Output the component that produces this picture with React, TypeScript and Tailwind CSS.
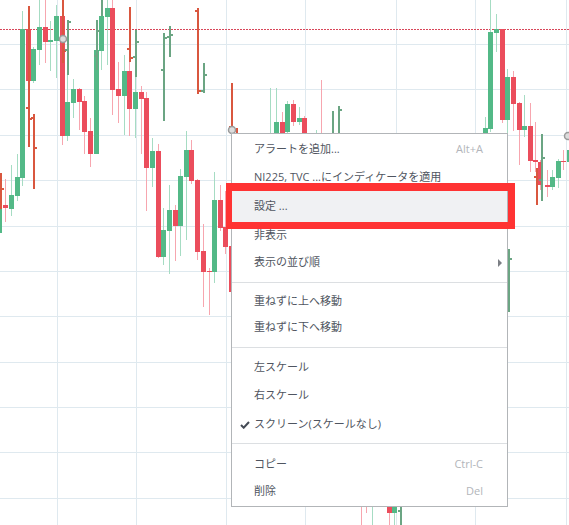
const GRID_X = [57, 136, 226, 305, 396, 475, 566];
const GRID_Y = [44, 89, 135, 180, 226, 271, 316, 362, 407, 452, 498];

// [left, bodyTop, bodyBottom, wickTop, wickBottom]
type C = [number, number, number, number, number];

const GREEN: C[] = [
  [-3, 209, 233, 200, 250],
  [9, 195, 209, 165, 216],
  [15, 177, 196, 154, 201],
  [20, 29, 178, 11, 186],
  [31, 49, 81, 47, 83],
  [37, 27, 50, 0, 65],
  [48, 40, 42, 21, 71],
  [54, 16, 41, 5, 78],
  [65, 102, 136, 75, 141],
  [71, 89, 103, 79, 118],
  [94, 50, 154, 40, 154],
  [99, 16, 51, 0, 70],
  [105, 8, 17, 0, 65],
  [122, 71, 96, 55, 135],
  [133, 92, 109, 66, 138],
  [150, 151, 168, 138, 187],
  [161, 230, 257, 208, 265],
  [167, 210, 231, 185, 274],
  [178, 176, 226, 169, 256],
  [184, 150, 177, 131, 240],
  [212, 200, 272, 172, 283],
  [268, 140, 140, 88, 140],
  [274, 122, 133, 88, 134],
  [285, 104, 132, 101, 134],
  [297, 118, 122, 107, 125],
  [314, 134, 134, 130, 134],
  [483, 128, 133, 117, 134],
  [488, 32, 129, 0, 132],
  [494, 29, 33, 14, 52],
  [505, 77, 120, 69, 134],
  [522, 126, 130, 95, 137],
  [550, 177, 187, 170, 190],
  [556, 161, 178, 159, 188],
  [567, 150, 162, 146, 170],
  [370, 525, 525, 505, 525],
  [392, 506, 513, 505, 525],
];

const RED: C[] = [
  [3, 205, 208, 179, 222],
  [26, 29, 81, 29, 81],
  [43, 27, 42, 0, 63],
  [60, 16, 136, 0, 145],
  [77, 89, 102, 88, 130],
  [82, 101, 132, 96, 154],
  [88, 131, 154, 118, 167],
  [110, 8, 90, 0, 115],
  [116, 89, 96, 62, 123],
  [127, 71, 109, 60, 136],
  [139, 92, 99, 86, 154],
  [144, 98, 168, 92, 211],
  [156, 151, 257, 144, 258],
  [173, 210, 226, 205, 261],
  [189, 150, 181, 140, 184],
  [195, 180, 252, 179, 260],
  [201, 251, 272, 224, 307],
  [207, 271, 272, 268, 315],
  [218, 200, 228, 185, 231],
  [223, 227, 247, 191, 254],
  [229, 246, 292, 246, 292],
  [280, 122, 133, 112, 134],
  [291, 104, 122, 100, 126],
  [302, 118, 133, 116, 134],
  [319, 134, 134, 80, 134],
  [500, 29, 120, 29, 123],
  [511, 77, 104, 71, 131],
  [517, 103, 130, 102, 165],
  [528, 126, 161, 103, 172],
  [533, 160, 162, 122, 172],
  [538, 162, 185, 160, 190],
  [545, 185, 187, 170, 197],
  [561, 161, 162, 150, 170],
  [359, 525, 525, 505, 525],
  [364, 525, 525, 505, 513],
  [387, 506, 513, 505, 525],
];

// candles overlap their neighbours, so paint them left to right
const CANDLES = [
  ...GREEN.map((c) => ({ c, body: "#53b987", wick: "#a6dcc3" })),
  ...RED.map((c) => ({ c, body: "#eb4d5c", wick: "#f7a6af" })),
].sort((a, b) => a.c[0] - b.c[0]);

// [x, top, bottom, leftTick, rightTick]
type B = [number, number, number, number | null, number | null];

const DARK_RED: B[] = [
  [0, 173, 209, null, 188],
  [28, 6, 147, 107, 118],
  [33, 114, 189, 117, 147],
  [62, 0, 63, null, 50],
  [129, 7, 62, 48, 57],
  [197, 8, 94, 10, 90],
  [231, 83, 134, 126, null],
  [236, 128, 134, null, null],
  [536, 168, 205, 176, null],
];

const DARK_GREEN: B[] = [
  [67, 20, 75, 49, 21],
  [96, 20, 70, 55, 30],
  [101, 0, 16, null, null],
  [135, 30, 77, 56, 41],
  [163, 33, 121, 69, 37],
  [169, 26, 57, 36, 34],
  [203, 63, 93, 90, 74],
  [332, 111, 134, null, null],
  [338, 106, 134, null, 109],
  [508, 249, 312, null, 258],
  [541, 134, 201, 179, 157],
  [400, 505, 525, 510, null],
];

function Bar({ b, color }: { b: B; color: string }) {
  const [x, top, bottom, l, r] = b;
  return (
    <g fill={color}>
      <rect x={x} y={top} width={2} height={bottom - top} />
      {l !== null && <rect x={x - 2} y={l} width={2} height={2} />}
      {r !== null && <rect x={x + 2} y={r} width={2} height={2} />}
    </g>
  );
}

function Candle({ c, body, wick }: { c: C; body: string; wick: string }) {
  const [x, bt, bb, wt, wb] = c;
  return (
    <g>
      <rect x={x + 2} y={wt} width={1} height={wb - wt} fill={wick} />
      <rect x={x} y={bt} width={5} height={bb - bt} fill={body} />
    </g>
  );
}

function Chart() {
  return (
    <svg width={569} height={525} className="absolute inset-0" shapeRendering="crispEdges">
      {GRID_X.map((x) => (
        <rect key={x} x={x} y={0} width={1} height={525} fill="#dfe9ef" />
      ))}
      {GRID_Y.map((y) => (
        <rect key={y} x={0} y={y} width={569} height={1} fill="#dfe9ef" />
      ))}
      <line x1={0} y1={29.5} x2={569} y2={29.5} stroke="#d8475a" strokeDasharray="2 1" />
      {CANDLES.map((k, i) => (
        <Candle key={i} c={k.c} body={k.body} wick={k.wick} />
      ))}
      {DARK_RED.map((b, i) => (
        <Bar key={i} b={b} color="#d9573f" />
      ))}
      {DARK_GREEN.map((b, i) => (
        <Bar key={i} b={b} color="#6ba583" />
      ))}
      <g shapeRendering="auto" fill="#dcdcdc" stroke="#9a9a9a" strokeWidth={1.5}>
        <circle cx={63} cy={39} r={3.5} />
        <circle cx={232} cy={130} r={3.5} />
        <circle cx={568} cy={136} r={3.5} />
      </g>
    </svg>
  );
}

function Row({
  label,
  hint,
  checked,
  arrow,
  active,
  h = "h-7",
}: {
  label: string;
  hint?: string;
  checked?: boolean;
  arrow?: boolean;
  active?: boolean;
  h?: string;
}) {
  return (
    <div className={`relative flex items-center justify-between pl-[22px] pr-6 ${h} ${active ? "bg-[#f0f1f3]" : ""}`}>
      {checked && (
        <svg viewBox="0 0 10 8" className="absolute left-2 top-[11px] h-2 w-[10px]" fill="none" stroke="#444b55" strokeWidth={2}>
          <path d="M1 4l2.7 2.7L9 1" />
        </svg>
      )}
      <span>{label}</span>
      {hint && <span className="text-[#b2b5ba]">{hint}</span>}
      {arrow && <span className="absolute right-[5px] top-[11px] h-0 w-0 border-y-[4px] border-l-[4px] border-y-transparent border-l-[#7c7f85]" />}
    </div>
  );
}

export default function App() {
  return (
    <div className="relative h-[525px] w-[569px] overflow-hidden bg-white">
      <Chart />

      <div
        className="absolute left-[231px] top-[133px] w-[277px] border border-[#b2b5b8] bg-white pt-[1px] pb-[1px] text-[11px] text-[#4f5560]"
        style={{ fontFamily: '"Open Sans", "Noto Sans CJK JP", sans-serif' }}
      >
        <Row label="アラートを追加..." hint="Alt+A" />
        <Row label="NI225, TVC ...にインディケータを適用" />
        <Row label="設定 ..." active h="h-[31px]" />
        <Row label="非表示" h="h-[26px]" />
        <Row label="表示の並び順" arrow />
        <div className="mt-[6px] mb-[5px] h-px bg-[#dcdfe2]" />
        <Row label="重ねずに上へ移動" h="h-[26px]" />
        <Row label="重ねずに下へ移動" h="h-[26px]" />
        <div className="mt-[7px] mb-[5px] h-px bg-[#dcdfe2]" />
        <Row label="左スケール" />
        <Row label="右スケール" h="h-[29px]" />
        <Row label="スクリーン(スケールなし)" checked />
        <div className="mt-[5px] mb-[6px] h-px bg-[#dcdfe2]" />
        <Row label="コピー" hint="Ctrl-C" />
        <Row label="削除" hint="Del" h="h-[27px]" />
      </div>

      {/* red annotation box */}
      <div className="absolute left-[226px] top-[183px] h-[46px] w-[289px] border-t-[8px] border-r-[7px] border-b-[7px] border-l-[6px] border-[#ff3333]" />
    </div>
  );
}
